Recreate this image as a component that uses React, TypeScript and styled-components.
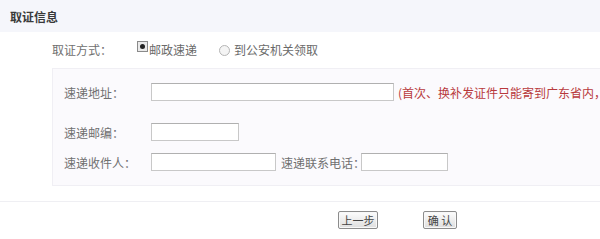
import * as React from "react";
import styled, { createGlobalStyle } from "styled-components";

const Global = createGlobalStyle`
  html, body {
    margin: 0;
    padding: 0;
    background: #fff;
    overflow: hidden;
  }
  body {
    font-family: "Noto Sans CJK SC", "Noto Sans", sans-serif;
    font-size: 12px;
    color: #666;
  }
`;

const Page = styled.div`
  width: 600px;
  height: 239px;
  overflow: hidden;
`;

const Section = styled.div`
  border-bottom: 1px solid #efeff3;
  height: 202px;
  box-sizing: border-box;
`;

const Header = styled.div`
  height: 32px;
  background: #f5f6fb;
  display: flex;
  align-items: center;
  padding-left: 10px;
  font-size: 12px;
  font-weight: bold;
  color: #3a3a3a;
`;

const Body = styled.div`
  padding-left: 52px;
`;

const MethodRow = styled.div`
  height: 36px;
  display: flex;
  align-items: center;
  line-height: 1;
`;

const MethodLabel = styled.span`
  width: 85px;
  color: #707070;
`;

const Option = styled.label<{ $gap: number }>`
  display: flex;
  align-items: center;
  margin-right: ${p => p.$gap}px;
  color: #6a6a6a;
`;

const CheckedRadio = styled.span`
  width: 9px;
  height: 9px;
  border: 1px solid #8a8a8a;
  background: #eaeaea;
  margin-top: -8px;
  margin-right: 1px;
  display: flex;
  align-items: center;
  justify-content: center;
  &:after {
    content: "";
    width: 5px;
    height: 5px;
    border-radius: 50%;
    background: #222;
  }
`;

const EmptyRadio = styled.span`
  width: 9px;
  height: 9px;
  border: 1px solid #b5b5b5;
  border-radius: 50%;
  background: #f4f4f4;
  margin-right: 4px;
`;

const Panel = styled.div`
  width: 580px;
  box-sizing: border-box;
  background: #fbfafd;
  border: 1px solid #f0eff4;
  padding: 14px 0 14px 11px;
  display: flex;
  flex-direction: column;
`;

const Row = styled.div<{ $mt: number }>`
  display: flex;
  align-items: center;
  height: 18px;
  margin-top: ${p => p.$mt}px;
  white-space: nowrap;
`;

const Label = styled.span<{ $w: number; $pl?: number }>`
  width: ${p => p.$w}px;
  padding-left: ${p => p.$pl ?? 0}px;
  flex: none;
  color: #707070;
`;

const Input = styled.input<{ $w: number }>`
  width: ${p => p.$w}px;
  height: 18px;
  box-sizing: border-box;
  border: 1px solid #c8c8c8;
  border-top-color: #b0b0b0;
  background: #fff;
  padding: 0;
  margin: 0;
  flex: none;
`;

const Hint = styled.span`
  color: #b8393c;
  margin-left: 4px;
`;

const Buttons = styled.div`
  display: flex;
  padding: 9px 0 0 338px;
  gap: 45px;
`;

const Button = styled.button<{ $w: number }>`
  width: ${p => p.$w}px;
  height: 18px;
  padding: 0;
  font-family: "Noto Sans CJK SC", sans-serif;
  font-size: 11px;
  color: #444;
  border: 1px solid #8c8c8c;
  border-radius: 2px;
  background: linear-gradient(#fdfdfd, #dedede);
  box-shadow: inset 0 0 0 1px #f8f8f8;
  line-height: 1;
`;

const App = () => (
  <Page>
    <Global />
    <Section>
      <Header>取证信息</Header>
      <Body>
        <MethodRow>
          <MethodLabel>取证方式：</MethodLabel>
          <Option $gap={22}>
            <CheckedRadio />
            邮政速递
          </Option>
          <Option $gap={0}>
            <EmptyRadio />
            到公安机关领取
          </Option>
        </MethodRow>
        <Panel>
          <Row $mt={0}>
            <Label $w={87}>速递地址：</Label>
            <Input $w={243} />
            <Hint>(首次、换补发证件只能寄到广东省内，外省地址请选择到公安机关领取)</Hint>
          </Row>
          <Row $mt={22}>
            <Label $w={87}>速递邮编：</Label>
            <Input $w={88} />
          </Row>
          <Row $mt={12}>
            <Label $w={87}>速递收件人：</Label>
            <Input $w={125} />
            <Label $w={80} $pl={5}>速递联系电话：</Label>
            <Input $w={87} />
          </Row>
        </Panel>
      </Body>
    </Section>
    <Buttons>
      <Button $w={40}>上一步</Button>
      <Button $w={34}>确 认</Button>
    </Buttons>
  </Page>
);

export default App;
